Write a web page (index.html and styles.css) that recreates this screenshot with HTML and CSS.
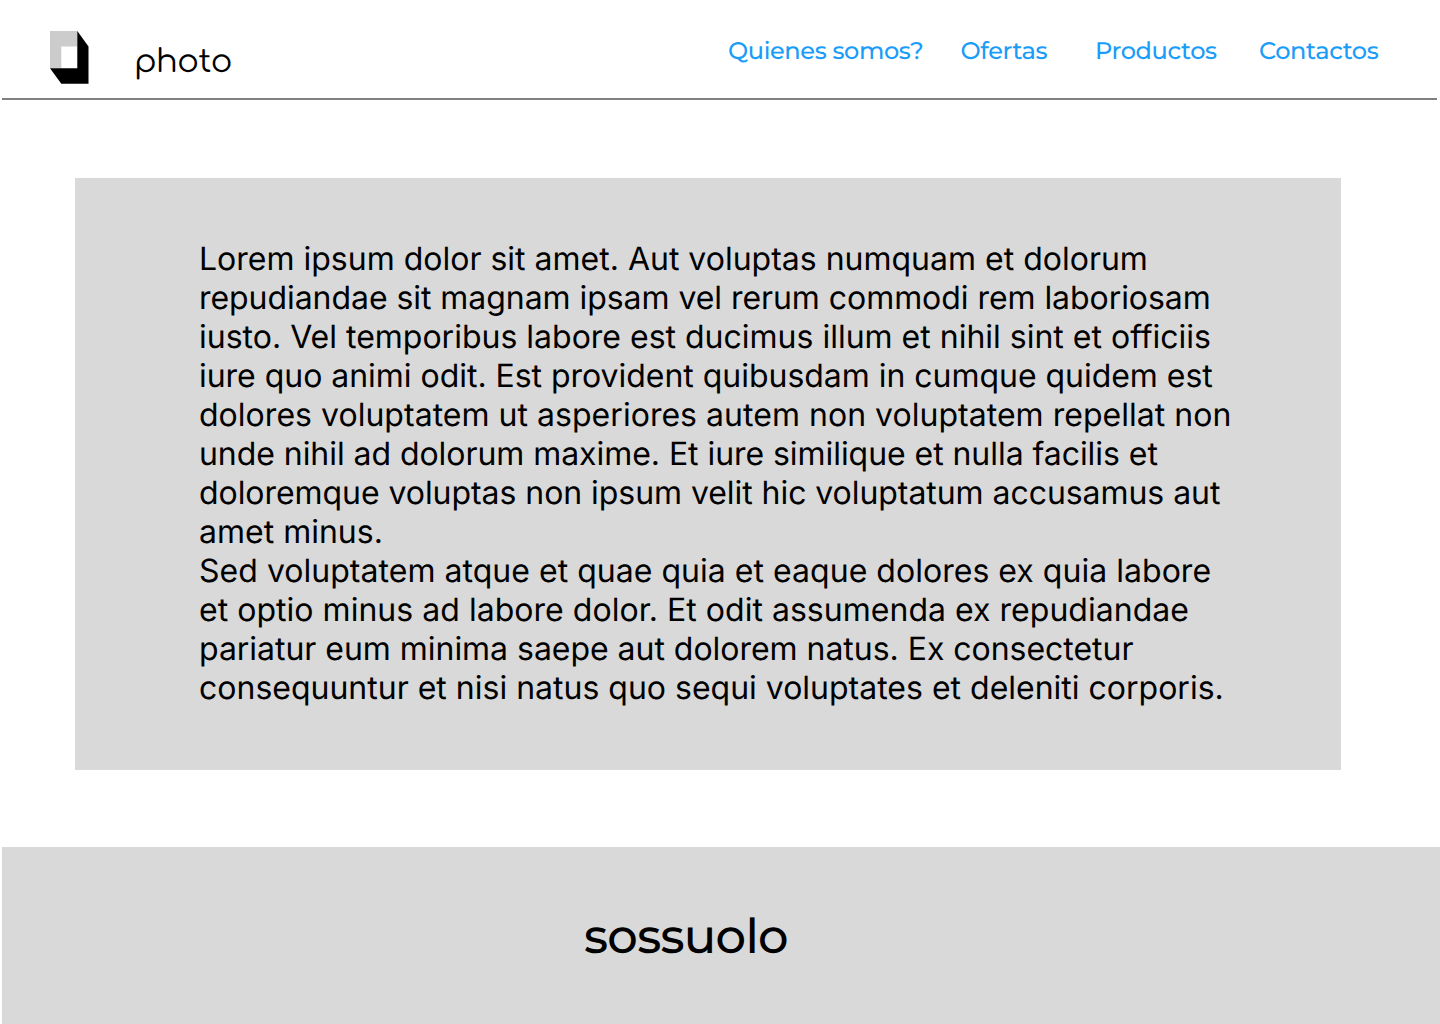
FILE: index.html
```html
<!DOCTYPE html>
<html lang="es">
<head>
<meta charset="utf-8">
<title>photo</title>
<link rel="stylesheet" href="styles.css">
</head>
<body>
<header class="header">
  <svg class="logo" viewBox="0 0 39 53" width="39" height="53" aria-hidden="true">
    <path fill="#ccc" d="M0 0H27.3V15.5H11.3V37.3H0Z"/>
    <path d="M27.3 0 38.5 15.5V52.8H11.3L0 37.3H27.3Z"/>
  </svg>
  <span class="brand">photo</span>
  <nav class="nav">
    <a class="link">Quienes somos?</a>
    <a class="link">Ofertas</a>
    <a class="link">Productos</a>
    <a class="link">Contactos</a>
  </nav>
</header>
<main class="panel">
  <p class="copy">Lorem ipsum dolor sit amet. Aut voluptas numquam et dolorum<br><span class="tight">repudiandae sit magnam ipsam vel rerum commodi rem laboriosam</span><br>iusto. Vel temporibus labore est ducimus illum et nihil sint et officiis<br><span class="snug">iure quo animi odit. Est provident quibusdam in cumque quidem est</span><br><span class="loose">dolores voluptatem ut asperiores autem non voluptatem repellat non</span><br><span class="tight">unde nihil ad dolorum maxime. Et iure similique et nulla facilis et</span><br><span class="tight">doloremque voluptas non ipsum velit hic voluptatum accusamus aut</span><br>amet minus.</p>
  <p class="copy"><span class="loose">Sed voluptatem atque et quae quia et eaque dolores ex quia labore</span><br><span class="loose">et optio minus ad labore dolor. Et odit assumenda ex repudiandae</span><br><span class="snug">pariatur eum minima saepe aut dolorem natus. Ex consectetur</span><br>consequuntur et nisi natus quo sequi voluptates et deleniti corporis.</p>
</main>
<footer class="footer"><span class="footer-name">sossuolo</span></footer>
</body>
</html>
```
FILE: styles.css
```css
* { box-sizing: border-box; }
body {
  margin: 0;
  height: 1024px;
  display: flex;
  flex-direction: column;
  overflow: hidden;
  background: #fff;
  color: #000;
  font-family: Inter, sans-serif;
  text-rendering: geometricPrecision;
}
.header {
  display: flex;
  align-items: flex-start;
  height: 100px;
  margin: 0 3px 0 2px;
  padding-left: 48px;
  border-bottom: 2px solid #808080;
}
.logo { margin-top: 31px; flex: none; }
.brand {
  width: 110px;
  margin: 43px 0 0 45px;
  font: 400 32px/40px Comfortaa, Lato, sans-serif;
  letter-spacing: -0.5px;
}
.nav {
  display: grid;
  grid-template-columns: 232.5px 134.5px 164px 130px;
  margin: 37px 0 0 484px;
}
.link {
  color: #1a9df8;
  font: 500 24px/29px Montserrat, Lato, sans-serif;
  letter-spacing: -0.36px;
  white-space: nowrap;
}
.panel {
  width: 1266px;
  height: 592px;
  margin: 78px 0 77px 75px;
  padding: 61px 0 0 124px;
  background: #d9d9d9;
}
.copy {
  margin: 0;
  font-size: 32px;
  line-height: 39px;
  white-space: nowrap;
}
.tight { letter-spacing: -0.055px; }
.snug { letter-spacing: -0.03px; }
.loose { letter-spacing: 0.03px; }
.footer {
  flex: 1;
  margin-left: 2px;
  padding: 61px 0 0 582px;
  background: #d9d9d9;
}
.footer-name {
  display: block;
  font: 500 48px/58px Montserrat, Lato, sans-serif;
  letter-spacing: -0.7px;
}
```
